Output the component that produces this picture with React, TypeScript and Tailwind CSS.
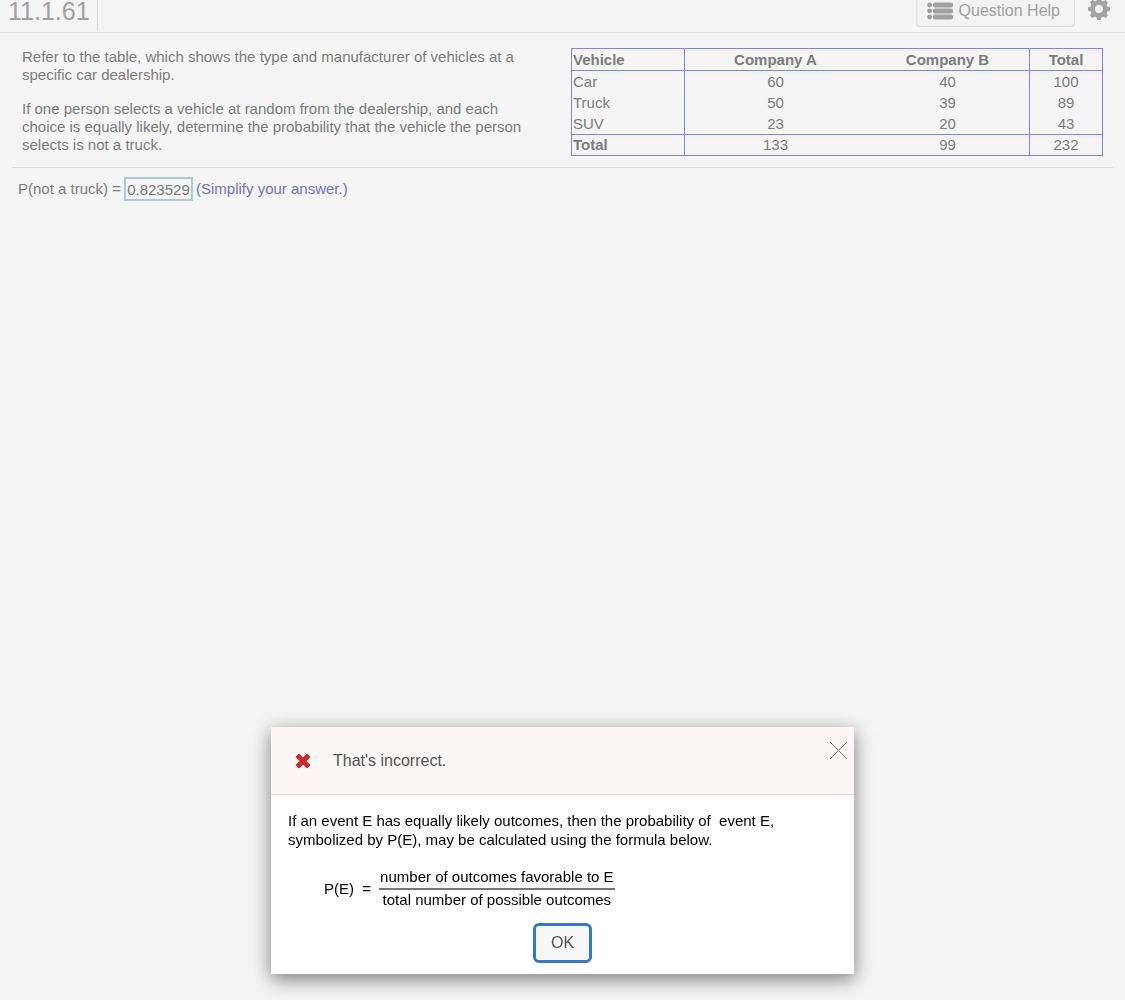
import React from "react";

const rows = [
  ["Car", "60", "40", "100"],
  ["Truck", "50", "39", "89"],
  ["SUV", "23", "20", "43"],
];

function ListIcon() {
  return (
    <svg width="26" height="18" viewBox="0 0 26 18" fill="#a0a0a0" aria-hidden="true">
      {[3, 9, 15].map((y) => (
        <g key={y}>
          <circle cx="2.6" cy={y} r="2.4" />
          <rect x="6" y={y - 2.5} width="20" height="5" rx="2" />
        </g>
      ))}
    </svg>
  );
}

function GearIcon() {
  return (
    <svg width="24" height="24" viewBox="0 0 24 24" aria-hidden="true">
      <g fill="#a3a3a3">
        {[0, 45, 90, 135, 180, 225, 270, 315].map((a) => (
          <path key={a} d="M9 5 L10.4 1 H13.6 L15 5 Z" transform={`rotate(${a} 12 12)`} />
        ))}
      </g>
      <circle cx="12" cy="12" r="6.3" fill="none" stroke="#a3a3a3" strokeWidth="4.6" />
    </svg>
  );
}

export default function App() {
  return (
    <div className="min-h-screen bg-[#f5f5f5] font-['Liberation_Sans',Arial,sans-serif] text-[15px] leading-[18px] text-[#7c7c7c]">
      <header className="flex h-[33px] items-start justify-between border-b border-[#e0e0e6] pr-3.5">
        <h1 className="flex h-[30px] items-start border-r border-[#d8d8de] pr-[7px] pl-2 text-[25px] leading-[23px] text-[#a0a0a0]">
          11.1.61
        </h1>
        <div className="flex items-start gap-3">
          <button className="flex h-[27px] items-start gap-1 rounded-b border border-t-0 border-[#dfdfdf] bg-[#f3f3f3] pt-0.5 pr-3.5 pl-2.5 text-[16px] leading-[18px] text-[#a0a0a0]">
            <ListIcon />
            <span className="pl-0.5">Question Help</span>
          </button>
          <button aria-label="Settings" className="-mt-[3px]">
            <GearIcon />
          </button>
        </div>
      </header>

      <main className="px-3">
        <section className="flex items-start justify-between border-b border-[#e0e0e0] pr-2.5 pb-[11px] pl-2.5">
          <div className="w-[505px] pt-[15px]">
            <p>
              Refer to the table, which shows the type and manufacturer of vehicles at a specific car dealership.
            </p>
            <p className="mt-4">
              If one person selects a vehicle at random from the dealership, and each choice is equally likely,
              determine the probability that the vehicle the person selects is not a truck.
            </p>
          </div>
          <table className="mt-[15px] w-[532px] table-fixed border-separate border-spacing-0 border border-[#8080f8] text-center">
            <colgroup>
              <col className="w-[113px]" />
              <col className="w-[181px]" />
              <col className="w-[163px]" />
              <col className="w-[73px]" />
            </colgroup>
            <thead>
              <tr className="h-[22px]">
                <th scope="col" className="border-r border-b border-[#8080f8] pl-px text-left">Vehicle</th>
                <th scope="col" className="border-b border-[#8080f8]">Company A</th>
                <th scope="col" className="border-b border-[#8080f8]">Company B</th>
                <th scope="col" className="border-b border-l border-[#8080f8]">Total</th>
              </tr>
            </thead>
            <tbody>
              {rows.map(([name, a, b, total]) => (
                <tr key={name} className="h-[21px]">
                  <td className="border-r border-[#8080f8] pl-px text-left">{name}</td>
                  <td>{a}</td>
                  <td>{b}</td>
                  <td className="border-l border-[#8080f8]">{total}</td>
                </tr>
              ))}
            </tbody>
            <tfoot>
              <tr className="h-[21px]">
                <th scope="row" className="border-t border-r border-[#8080f8] pl-px text-left">Total</th>
                <td className="border-t border-[#8080f8]">133</td>
                <td className="border-t border-[#8080f8]">99</td>
                <td className="border-t border-l border-[#8080f8]">232</td>
              </tr>
            </tfoot>
          </table>
        </section>

        <div className="flex items-center gap-[3px] pt-[9px] pl-1.5">
          <label htmlFor="answer">P(not a truck) =</label>
          <input
            id="answer"
            defaultValue="0.823529"
            className="h-6 w-[69px] border-2 border-[#a9cbd6] bg-transparent text-center"
          />
          <span className="text-[#7373bd]">(Simplify your answer.)</span>
        </div>
      </main>

      <div
        role="dialog"
        aria-labelledby="result"
        className="fixed inset-x-0 bottom-[26px] mx-auto w-[583px] bg-white text-black shadow-[0_5px_18px_0_rgba(0,0,0,0.5)]"
      >
        <div className="flex h-[68px] items-center border-b border-[#f5cfcf] bg-[#fdf6f6] pl-6">
          <svg width="16" height="16" viewBox="0 0 16 16" aria-hidden="true">
            <path
              d="M1.5 4 L4 1.5 L8 5.5 L12 1.5 L14.5 4 L10.5 8 L14.5 12 L12 14.5 L8 10.5 L4 14.5 L1.5 12 L5.5 8 Z"
              fill="#c92a2a"
              stroke="#c92a2a"
              strokeWidth="1.6"
              strokeLinejoin="round"
            />
          </svg>
          <h2 id="result" className="pl-[22px] text-[16px] text-[#555]">That's incorrect.</h2>
          <button aria-label="Close" className="mr-1.5 mb-5 ml-auto">
            <svg width="19" height="19" viewBox="0 0 19 19" aria-hidden="true">
              <path d="M1 1 L18 18 M18 1 L1 18" stroke="#777" strokeWidth="1" />
            </svg>
          </button>
        </div>
        <div className="px-[17px] pt-4 pb-[11px]">
          <p className="leading-[19px]">
            If an event E has equally likely outcomes, then the probability of&nbsp; event E,
            <br />
            symbolized by P(E), may be calculated using the formula below.
          </p>
          <div className="mt-[19px] flex items-center pl-9">
            <span>P(E)&nbsp; =</span>
            <div className="ml-2 text-center">
              <div className="border-b-2 border-[#777] px-px pb-0.5">number of outcomes favorable to E</div>
              <div className="pt-px">total number of possible outcomes</div>
            </div>
          </div>
          <div className="mt-3.5 flex justify-center">
            <button className="h-10 w-[59px] rounded-md border-[3px] border-[#3478c6] bg-[#f7f7f7] text-[16px] text-[#555]">
              OK
            </button>
          </div>
        </div>
      </div>
    </div>
  );
}
